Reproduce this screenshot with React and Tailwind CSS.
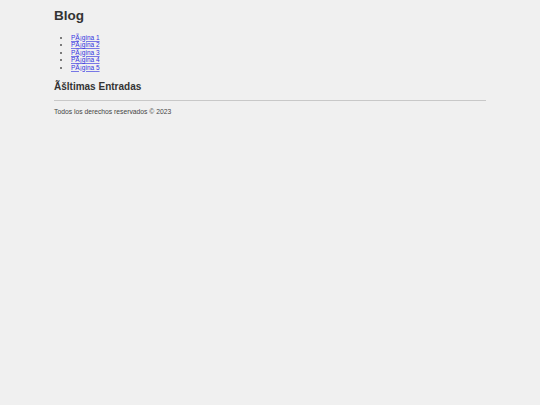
export default function App() {
  const pages = [1, 2, 3, 4, 5];

  return (
    <div className="min-h-[405px] bg-[#f0f0f0] text-[#333] font-['Liberation_Sans',Arial,sans-serif]">
      <div className="w-[432px] mx-auto pt-[8px]">
        {/* Cabecera */}
        <h1 className="text-[13.5px] leading-[16px] font-bold">Blog</h1>

        {/* Navegación */}
        <ul className="mt-[9.5px] pl-[17px] list-disc text-[6.5px] leading-[7.5px] marker:text-[#555]">
          {pages.map((n) => (
            <li key={n}>
              <a href="#" className="text-[#3333e0] underline decoration-[#7777e6]">
                PÃ¡gina {n}
              </a>
            </li>
          ))}
        </ul>

        {/* Entradas */}
        <h2 className="mt-[8.5px] text-[10px] leading-[13px] font-bold">Ãšltimas Entradas</h2>

        {/* Pie */}
        <hr className="mt-[7.5px] border-0 border-t border-[#c8c8c8]" />
        <p className="mt-[7px] text-[6.75px] leading-[7.5px] text-[#444]">Todos los derechos reservados © 2023</p>
      </div>
    </div>
  );
}
